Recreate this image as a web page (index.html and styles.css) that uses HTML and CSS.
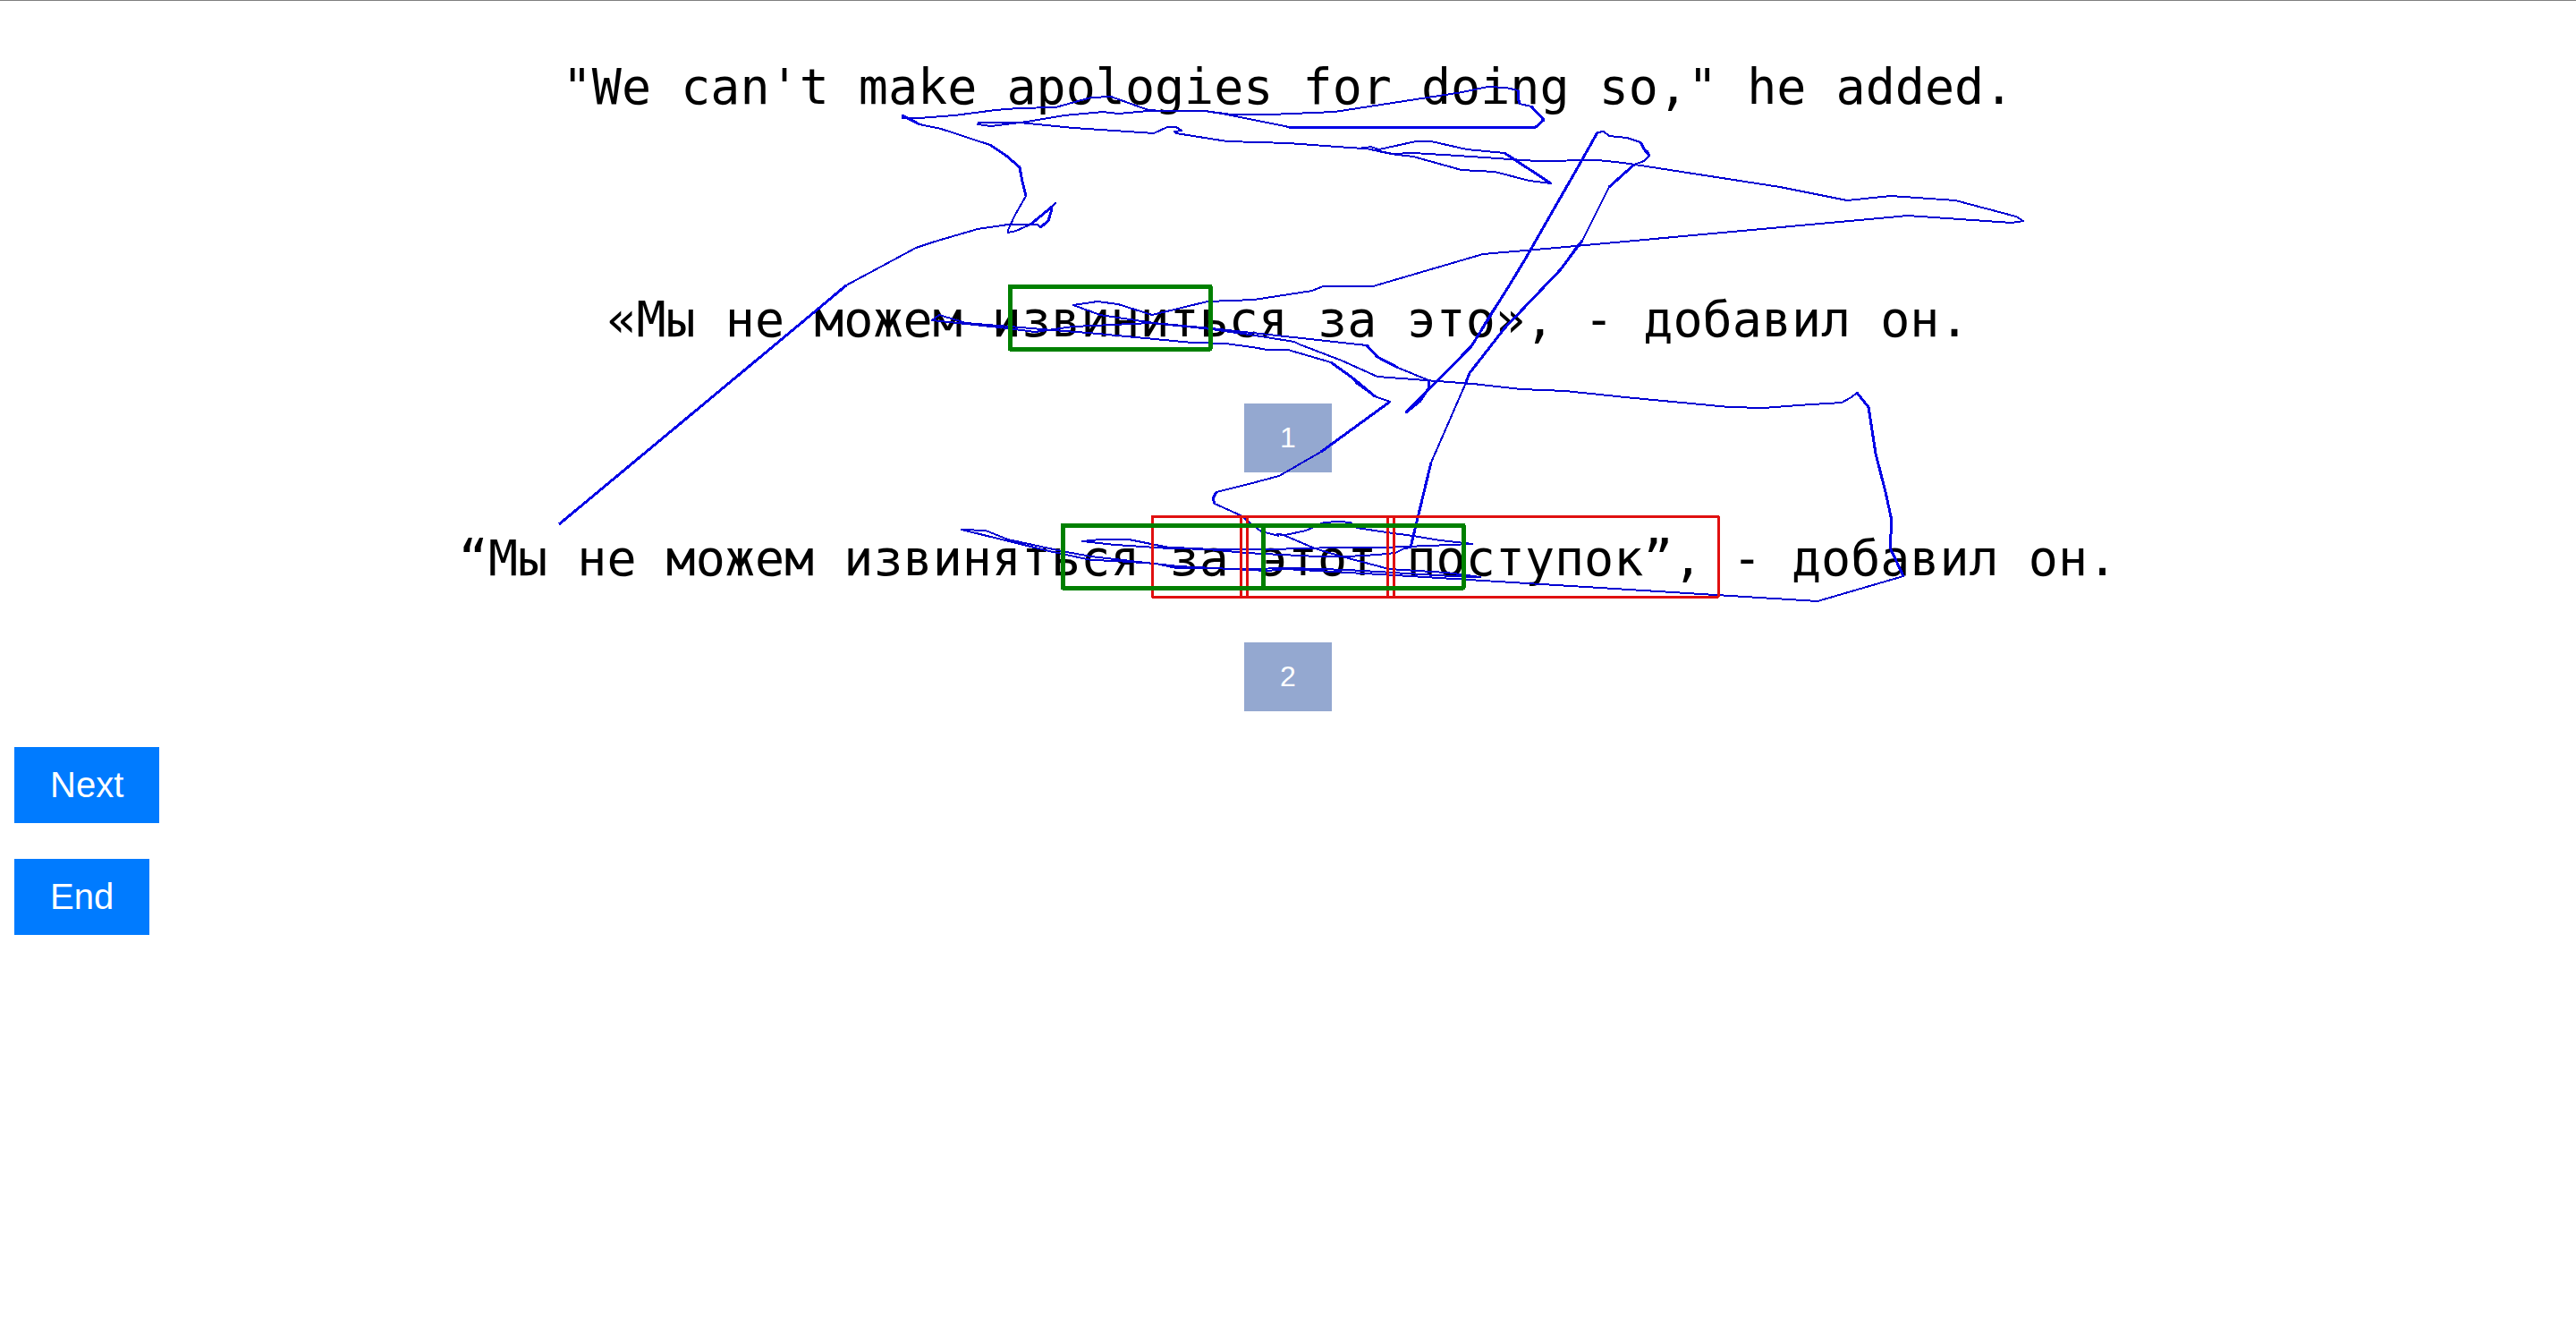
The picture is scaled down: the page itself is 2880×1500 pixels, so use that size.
FILE: index.html
```html
<!DOCTYPE html>
<html lang="en">
<head>
<meta charset="utf-8">
<title>Translation comparison</title>
<link rel="stylesheet" href="styles.css">
</head>
<body>
<main class="trial">
  <p class="sentence">"We can't make apologies for doing so," he added.</p>
  <section class="option">
    <p class="sentence" lang="ru">«Мы не можем извиниться за это», - добавил он.</p>
    <button class="choice" type="button">1</button>
  </section>
  <section class="option">
    <p class="sentence" lang="ru">“Мы не можем извиняться за этот поступок”, - добавил он.</p>
    <button class="choice" type="button">2</button>
  </section>
  <nav class="actions">
    <button class="action" type="button">Next</button>
    <button class="action" type="button">End</button>
  </nav>
</main>
<!-- Gaze trace and word boxes, drawn around the centre line of the text -->
<svg class="overlay" aria-hidden="true">
  <svg x="50%" overflow="visible">
    <g transform="translate(-1440 0)">
      <g class="trace">
        <polyline points="625,586 897,360 946,319 1024,277 1045,270 1093,256 1127,251 1160,251 1163,254 1167,252 1172,247 1175,237 1175,232 1180,227 1152,251 1136,258 1127,260 1127,257 1135,240 1147,219 1143,203 1140,187 1125,174 1107,162 1052,144 1028,139 1009,129 1009,132 1027,132 1067,129 1113,123 1138,121 1180,120 1220,109 1242,108 1284,123 1300,124 1347,124 1372,128 1441,142 1717,142 1726,134 1717,124 1712,119 1699,116 1697,109 1697,101 1684,98 1663,97 1635,103 1492,125 1420,128 1377,128 1347,124 1284,124 1250,127 1233,125 1190,129 1148,136 1108,141 1093,139 1094,137 1140,137 1200,143 1290,149 1305,142 1315,142 1321,146 1313,147 1315,149 1372,158 1440,160 1495,164 1524,166 1532,164 1542,167 1583,158 1600,158 1640,167 1682,171 1734,205 1710,202 1671,192 1634,190 1580,175 1555,172 1523,165 1557,172 1580,171 1630,174 1718,180 1786,179 1815,182 1990,209 2065,224 2114,219 2186,224 2254,242 2262,247 2249,249 2133,241 1740,277 1658,284 1535,320 1479,320 1467,325 1402,335 1350,337 1288,352 1250,340 1227,337 1200,341 1230,352 1290,361 1354,367 1446,377 1528,386 1540,399 1563,411 1597,425 1597,434 1588,448 1572,461 1645,387 1665,353 1688,318 1705,290 1768,180 1786,148 1793,147 1799,152 1819,154 1834,159 1839,168 1842,169 1844,174 1838,180 1827,184 1815,195 1799,209 1769,269 1763,275 1745,301 1682,367 1643,417 1638,430 1600,517 1592,550 1577,612 1570,613 1560,618 1540,620 1507,622 1473,622 1393,618 1340,613 1307,612 1262,603 1230,603 1210,605 1247,609 1307,613 1357,614 1420,614 1493,612 1547,612 1646,608 1610,604 1580,599 1550,595 1517,590 1510,584 1497,583 1480,584 1460,593 1437,598 1428,597 1435,598 1470,613 1500,622 1553,636 1617,640 1655,645 1623,644 1507,637 1443,635 1393,636 1340,635 1315,635 1293,630 1247,627 1220,626 1173,616 1075,592 1102,593 1127,603 1187,616 1220,622 1290,630 1317,633 1417,638 1437,636 1560,643 1740,654 2032,672 2128,644 2113,612 2115,582 2108,550 2097,507 2089,455 2076,439 2070,444 2059,450 2010,453 1972,456 1933,455 1817,444 1750,437 1700,435 1647,429 1540,421 1500,403 1453,385 1447,382 1397,374 1355,368 1287,361 1200,365 1157,371 1127,367 1042,358 1050,352 1080,361 1177,369 1217,372 1333,383 1370,384 1400,388 1417,391 1440,391 1488,405 1513,423 1516,428 1537,443 1554,449 1477,505 1430,532 1400,540 1360,550 1356,557 1358,563 1387,576 1410,594 1430,599"/>
      </g>
      <g class="trace trace-slow">
        <polyline points="625,586 897,360 946,319"/>
        <polyline points="1009,129 1028,139"/>
        <polyline points="1107,162 1125,174 1140,187 1143,203 1147,219"/>
        <polyline points="1152,251 1175,232 1175,237 1172,247 1163,254"/>
        <polyline points="1441,142 1717,142 1726,134 1712,119"/>
        <polyline points="1697,101 1697,109 1699,116"/>
        <polyline points="1682,171 1734,205"/>
        <polyline points="1488,405 1513,423 1537,443"/>
        <polyline points="1528,386 1540,399 1563,411"/>
        <polyline points="1554,449 1477,505"/>
        <polyline points="1597,425 1597,434 1588,448 1572,461 1645,387 1688,318 1705,290 1768,180 1786,148"/>
        <polyline points="1834,159 1839,168 1844,174"/>
        <polyline points="1827,184 1799,209"/>
        <polyline points="1769,269 1745,301 1682,367 1643,417 1638,430"/>
        <polyline points="1600,517 1592,550 1577,612"/>
        <polyline points="1360,550 1356,557 1358,563"/>
        <polyline points="2108,550 2097,507 2089,455 2076,439"/>
        <polyline points="2128,644 2113,612 2115,582 2108,550"/>
      </g>
      <g class="box box-error">
        <rect x="1288" y="577" width="99" height="90"/>
        <rect x="1394" y="577" width="157" height="90"/>
        <rect x="1558" y="577" width="363" height="90"/>
        <path d="M1387 577H1394M1387 667H1394M1551 577H1558M1551 667H1558"/>
      </g>
      <g class="box box-match">
        <rect x="1129" y="320" width="224" height="70"/>
        <rect x="1188" y="587" width="224" height="70"/>
        <rect x="1412" y="587" width="224" height="70"/>
      </g>
    </g>
  </svg>
</svg>
</body>
</html>
```
FILE: styles.css
```css
body {
  position: relative;
  margin: 0;
  background: #fff;
  font-family: "Liberation Sans", Arial, sans-serif;
}

.trial {
  display: flex;
  flex-direction: column;
  padding: 61px 16px 40px;
  border-top: 1px solid #808080;
}

.sentence {
  margin: 0;
  color: #000;
  font-family: Consolas, "DejaVu Sans Mono", monospace;
  font-size: 55px;
  line-height: 70px;
  text-align: center;
}

.option {
  display: flex;
  flex-direction: column;
  align-items: center;
  gap: 59px;
  margin-bottom: 61px;
}

.trial > .sentence {
  margin-bottom: 190px;
}

.option:last-of-type {
  margin-bottom: 40px;
}

button {
  padding: 20px 40px;
  border: 0;
  color: #fff;
  font-family: inherit;
}

.choice {
  background: #94a8d0;
  font-size: 32px;
  line-height: 37px;
}

.actions {
  display: flex;
  flex-direction: column;
  align-items: flex-start;
  gap: 40px;
}

.action {
  background: #007bff;
  font-size: 40px;
  line-height: 45px;
}

.overlay {
  position: absolute;
  top: 0;
  left: 0;
  width: 100%;
  height: 100%;
  overflow: visible;
  pointer-events: none;
}

.trace {
  fill: none;
  stroke: #0000d2;
  stroke-width: 2;
  stroke-linejoin: round;
  shape-rendering: crispEdges;
}

.trace-slow {
  stroke: #0000e6;
  stroke-width: 3;
}

.box {
  fill: none;
  stroke-linejoin: round;
  shape-rendering: crispEdges;
}

.box-error {
  stroke: #e01010;
  stroke-width: 3;
}

.box-match {
  stroke: #008000;
  stroke-width: 5;
}
```
